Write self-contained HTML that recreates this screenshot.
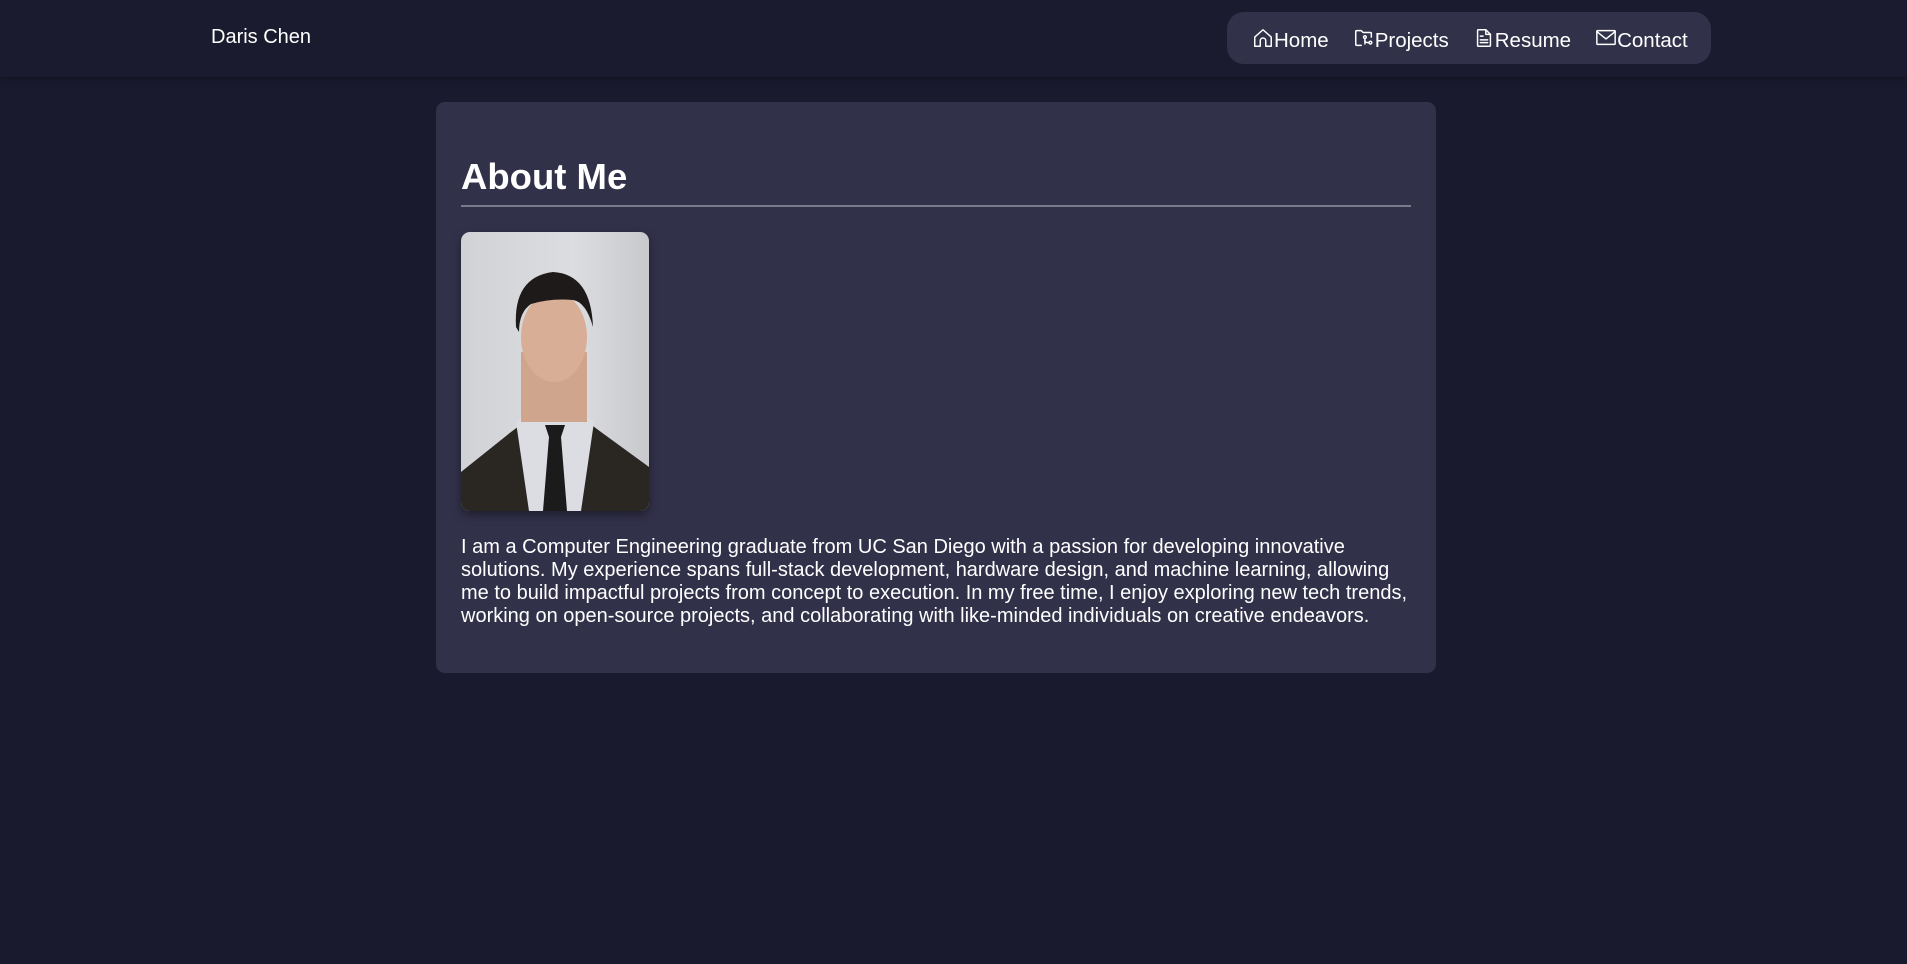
<!DOCTYPE html>
<html><head><meta charset="utf-8"><style>
*{margin:0;padding:0;box-sizing:border-box}
html,body{width:1907px;height:964px;background:#1a1a2e;overflow:hidden;font-family:"Liberation Sans",Arial,sans-serif;color:#fff}
header{position:absolute;left:0;top:0;width:1907px;height:77px;background:#1b1b2f;box-shadow:0 2px 6px rgba(0,0,0,.3)}
.brand{position:absolute;left:211px;top:26px;font-size:20px}
nav{position:absolute;left:1227px;top:12px;width:484px;height:52px;background:#32314a;border-radius:17px;display:flex;align-items:center;padding-left:25px}
nav a{display:flex;align-items:flex-end;font-size:20.5px;color:#fff;text-decoration:none;margin-right:24px;position:relative;top:2px}
nav svg{width:22px;height:22px;margin-bottom:4px;fill:none;stroke:#fff;stroke-width:1.6;stroke-linecap:round;stroke-linejoin:round}
.card{position:absolute;left:436px;top:102px;width:1000px;height:571px;background:#32314a;border-radius:9px}
h1{position:absolute;left:25px;top:54px;font-size:36.5px;font-weight:bold}
.rule{position:absolute;left:25px;top:103px;width:950px;height:2px;background:#7a7a8a}
.photo{position:absolute;left:25px;top:130px;width:188px;height:279px;border-radius:9px;overflow:hidden;box-shadow:0 4px 10px rgba(0,0,0,.4);background:linear-gradient(90deg,#d0d2d6,#dcdde0 60%,#c8c9cc)}
p{position:absolute;left:25px;top:434px;width:950px;font-size:20px;line-height:23px}
</style></head><body>
<header>
<div class="brand">Daris Chen</div>
<nav>
<a><svg viewBox="0 0 24 24"><path d="M3 11L12 3l9 8v10H15v-6a3 3 0 0 0-6 0v6H3z"/></svg>Home</a>
<a><svg viewBox="0 0 24 24"><path d="M9 20H4a1 1 0 0 1-1-1V5a1 1 0 0 1 1-1h5l2 2h8a1 1 0 0 1 1 1v4"/><circle cx="13" cy="11" r="1.5"/><path d="M13 12.5v6"/><circle cx="19" cy="17" r="1.5"/><path d="M13 15c0 2 2 2 4.5 2"/></svg>Projects</a>
<a><svg viewBox="0 0 24 24"><path d="M14 3H6a1 1 0 0 0-1 1v16a1 1 0 0 0 1 1h12a1 1 0 0 0 1-1V8z"/><path d="M14 3v5h5M8 10h3M8 14h8M8 17h8"/></svg>Resume</a>
<a><svg viewBox="0 0 24 24"><rect x="2" y="4" width="20" height="15" rx="1"/><path d="M2 5l10 8 10-8"/></svg>Contact</a>
</nav>
</header>
<div class="card">
<h1>About Me</h1>
<div class="rule"></div>
<div class="photo">
<svg width="188" height="279" viewBox="0 0 188 279">
<path d="M0 240 L50 200 L70 185 L120 185 L140 200 L188 235 L188 279 L0 279Z" fill="#2a2622"/>
<path d="M55 190 L68 180 L120 180 L133 190 L120 279 L68 279Z" fill="#dcdde3"/>
<path d="M84 193 L104 193 L100 205 L106 279 L82 279 L88 205Z" fill="#1c1b1b"/>
<rect x="60" y="120" width="66" height="70" fill="#cfa58e"/>
<ellipse cx="93" cy="105" rx="33" ry="45" fill="#d8ae96"/>
<path d="M55 95 Q52 45 92 40 Q130 42 132 95 Q125 70 112 68 Q90 66 70 72 Q58 80 58 100Z" fill="#1d1a19"/>
</svg>
</div>
<p>I am a Computer Engineering graduate from UC San Diego with a passion for developing innovative solutions. My experience spans full-stack development, hardware design, and machine learning, allowing me to build impactful projects from concept to execution. In my free time, I enjoy exploring new tech trends, working on open-source projects, and collaborating with like-minded individuals on creative endeavors.</p>
</div>
</body></html>
